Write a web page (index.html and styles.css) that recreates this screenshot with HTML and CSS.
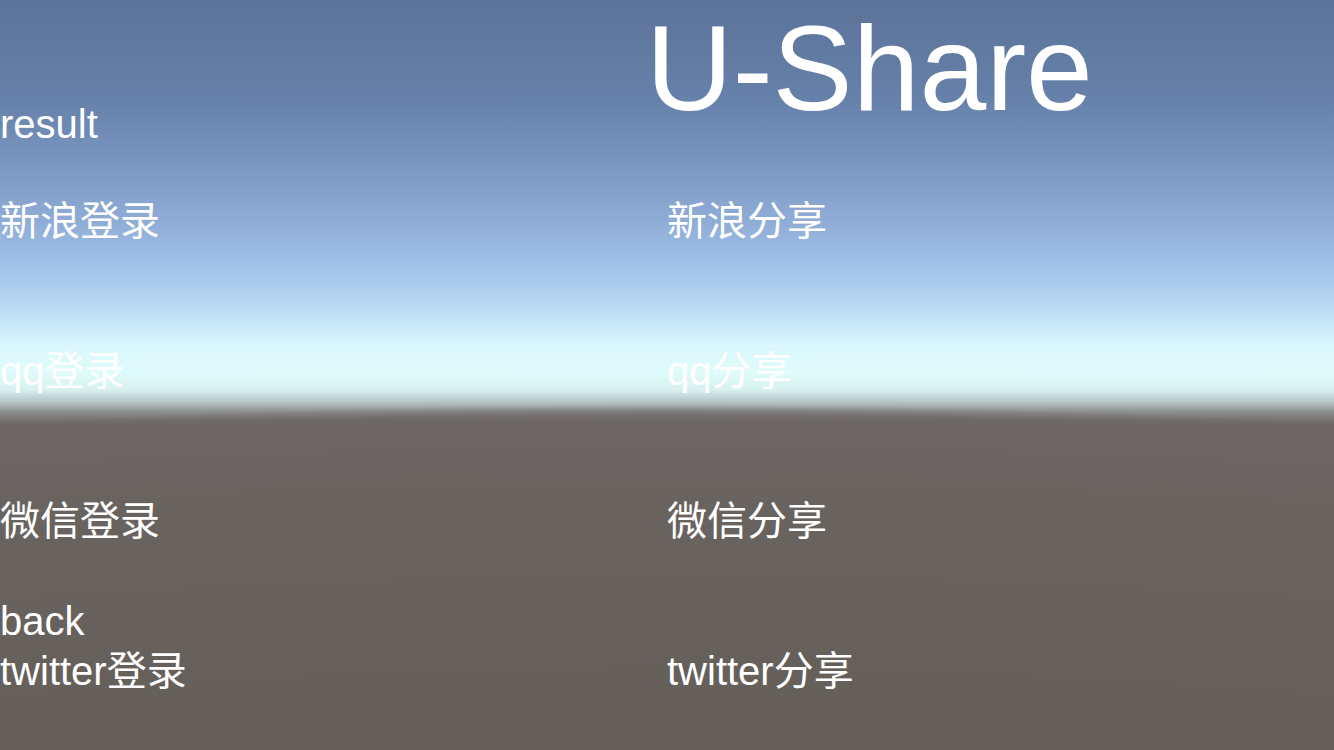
FILE: index.html
```html
<!DOCTYPE html>
<html lang="zh">
<head>
<meta charset="utf-8">
<title>U-Share</title>
<link rel="stylesheet" href="styles.css">
</head>
<body>
<main class="scene">
  <section class="col col-left">
    <div class="label result">result</div>
    <div class="label btn-first">新浪登录</div>
    <div class="label btn">qq登录</div>
    <div class="label btn">微信登录</div>
    <div class="label back">back</div>
    <div class="label twitter-left">twitter登录</div>
  </section>
  <section class="col col-right">
    <h1 class="title">U-Share</h1>
    <div class="label btn-first-right">新浪分享</div>
    <div class="label btn">qq分享</div>
    <div class="label btn">微信分享</div>
    <div class="label btn">twitter分享</div>
  </section>
</main>
</body>
</html>
```
FILE: styles.css
```css
html, body {
  margin: 0;
  padding: 0;
}

body {
  width: 1334px;
  height: 750px;
  overflow: hidden;
  font-family: "Liberation Sans", "Noto Sans CJK SC", sans-serif;
  color: #ffffff;
  background:
    radial-gradient(3045px 700px at 50% 1105px,
      #645e58 48%,
      #6a6461 90%,
      #6c6664 97%,
      rgba(108,102,100,0.7) 98.4%,
      rgba(108,102,100,0) 100%),
    linear-gradient(to bottom,
      #5c7399 0px,
      #6681aa 100px,
      #7895c0 160px,
      #8eacd6 220px,
      #a3c3ea 270px,
      #bcdcf4 310px,
      #d9f7fc 345px,
      #e0fbfb 372px,
      #d8f0f0 390px,
      #b6c4c6 402px,
      #8c8d8e 412px,
      #6d6665 424px,
      #6a6461 450px,
      #67615c 600px,
      #655f59 750px);
}

.scene {
  display: grid;
  grid-template-columns: 667px 667px;
  height: 750px;
}

.col {
  display: flex;
  flex-direction: column;
  align-items: flex-start;
}

.col-left {
  padding-top: 101px;
}

.col-right {
  padding-top: 8px;
}

.label {
  font-size: 40px;
  line-height: 46px;
  height: 46px;
  white-space: nowrap;
}

.title {
  margin: 0 0 0 -21px;
  font-size: 120px;
  font-weight: normal;
  line-height: 120px;
  height: 120px;
  white-space: nowrap;
}

.btn-first {
  margin-top: 51px;
}

.btn-first-right {
  margin-top: 70px;
}

.btn {
  margin-top: 104px;
}

.back {
  margin-top: 54px;
}

.twitter-left {
  margin-top: 4px;
}
```
